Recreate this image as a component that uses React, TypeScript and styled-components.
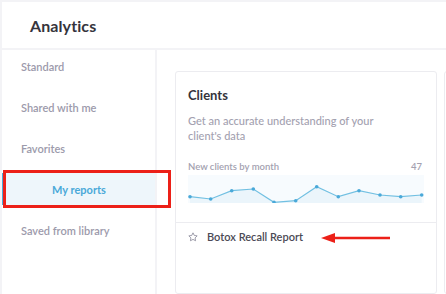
import React from "react";
import styled, { createGlobalStyle } from "styled-components";

const Global = createGlobalStyle`
  html, body { margin: 0; padding: 0; background: #f3f3f6; }
  body { font-family: Lato, "Noto Sans", sans-serif; width: 446px; height: 294px; overflow: hidden; }
  * { box-sizing: border-box; }
`;

const Page = styled.div`
  position: relative;
  width: 446px;
  height: 294px;
  padding: 2px 0 0 2px;
  background: #f3f3f6;
  display: flex;
  flex-direction: column;
`;

const Header = styled.header`
  height: 46px;
  background: #fff;
  display: flex;
  align-items: center;
  padding-left: 28px;
  margin-bottom: 2px;
`;

const Title = styled.h1`
  margin: 0;
  font-size: 16px;
  font-weight: 700;
  color: #35343c;
  letter-spacing: 0.1px;
`;

const Body = styled.div`
  flex: 1;
  display: flex;
  min-height: 0;
`;

const Sidebar = styled.nav`
  width: 153px;
  background: #fff;
  display: flex;
  flex-direction: column;
  gap: 9px;
  margin-right: 2px;
`;

const NavItem = styled.div<{ $active?: boolean }>`
  height: 32px;
  display: flex;
  align-items: center;
  justify-content: ${(p) => (p.$active ? "center" : "flex-start")};
  padding-left: ${(p) => (p.$active ? "0" : "19px")};
  font-size: 11px;
  font-weight: ${(p) => (p.$active ? 700 : 600)};
  color: ${(p) => (p.$active ? "#4aa9d9" : "#9c9aab")};
  background: ${(p) => (p.$active ? "#eef6fb" : "transparent")};
  border-left: ${(p) => (p.$active ? "1px solid #4aa9d9" : "none")};
`;

const Main = styled.main`
  flex: 1;
  background: #fff;
  padding: 21px 0 0 18px;
  display: flex;
  gap: 7px;
  overflow: hidden;
`;

const Card = styled.section`
  flex: 0 0 262px;
  border: 1px solid #ececf0;
  border-radius: 3px;
  display: flex;
  flex-direction: column;
`;

const GhostCard = styled(Card)`
  flex: 0 0 40px;
`;

const CardTop = styled.div`
  padding: 15px 12px 19px 12px;
  border-bottom: 1px solid #ececf0;
`;

const CardTitle = styled.h2`
  margin: 0 0 10px;
  font-size: 13px;
  font-weight: 700;
  color: #35343c;
`;

const CardDesc = styled.p`
  margin: 0 0 18px;
  font-size: 11px;
  line-height: 15px;
  color: #a3a1b0;
  font-weight: 500;
`;

const ChartHead = styled.div`
  display: flex;
  justify-content: space-between;
  font-size: 9.5px;
  font-weight: 600;
  color: #a3a1b0;
  margin-bottom: 3px;
  padding-right: 2px;
`;

const ReportRow = styled.div`
  display: flex;
  align-items: center;
  gap: 9px;
  padding: 7px 0 0 12px;
  font-size: 11px;
  font-weight: 600;
  color: #4b4a55;
`;

const RedBox = styled.div`
  position: absolute;
  left: 3px;
  top: 170px;
  width: 168px;
  height: 38px;
  border: 3px solid #ec2018;
  pointer-events: none;
`;

const Arrow = styled.svg`
  position: absolute;
  left: 321px;
  top: 232px;
`;

const points = [
  [190, 196.7], [210.7, 199], [231.7, 190.7], [253.3, 189], [274, 202.3], [295.7, 200.7],
  [316.7, 186.7], [338.3, 196.7], [359, 190.7], [380, 195], [400.7, 196.7], [421.7, 195],
];

function Chart() {
  const ox = 188;
  const oy = 175;
  const pts = points.map(([x, y]) => [x - ox, y - oy]);
  const line = pts.map((p) => p.join(",")).join(" ");
  const area = `${pts[0][0]},28 ${line} ${pts[pts.length - 1][0]},28`;
  return (
    <svg width="236" height="28" viewBox="0 0 236 28" style={{ display: "block" }}>
      <rect x="0" y="0" width="236" height="28" fill="#f7fbfe" />
      <polygon points={area} fill="#ebf5fb" />
      <polyline points={line} fill="none" stroke="#72c0e2" strokeWidth="1.2" />
      {pts.map(([x, y], i) => (
        <circle key={i} cx={x} cy={y} r="1.8" fill="#4aa9d9" />
      ))}
    </svg>
  );
}

function StarIcon() {
  return (
    <svg width="10" height="10" viewBox="0 0 24 24" fill="none" stroke="#8c8a9a" strokeWidth="2" strokeLinejoin="round">
      <polygon points="12,2 15.09,8.26 22,9.27 17,14.14 18.18,21.02 12,17.77 5.82,21.02 7,14.14 2,9.27 8.91,8.26" />
    </svg>
  );
}

export default function App() {
  return (
    <>
      <Global />
      <Page>
        <Header>
          <Title>Analytics</Title>
        </Header>
        <Body>
          <Sidebar>
            <NavItem>Standard</NavItem>
            <NavItem>Shared with me</NavItem>
            <NavItem>Favorites</NavItem>
            <NavItem $active>My reports</NavItem>
            <NavItem>Saved from library</NavItem>
          </Sidebar>
          <Main>
            <Card>
              <CardTop>
                <CardTitle>Clients</CardTitle>
                <CardDesc>
                  Get an accurate understanding of your
                  <br />
                  client's data
                </CardDesc>
                <ChartHead>
                  <span>New clients by month</span>
                  <span>47</span>
                </ChartHead>
                <Chart />
              </CardTop>
              <ReportRow>
                <StarIcon />
                <span>Botox Recall Report</span>
              </ReportRow>
            </Card>
            <GhostCard />
          </Main>
        </Body>
        <RedBox />
        <Arrow width="72" height="12" viewBox="0 0 72 12">
          <line x1="10" y1="6" x2="69" y2="6" stroke="#ec2018" strokeWidth="2.6" />
          <polygon points="0,6 14,1 14,11" fill="#ec2018" />
        </Arrow>
      </Page>
    </>
  );
}
